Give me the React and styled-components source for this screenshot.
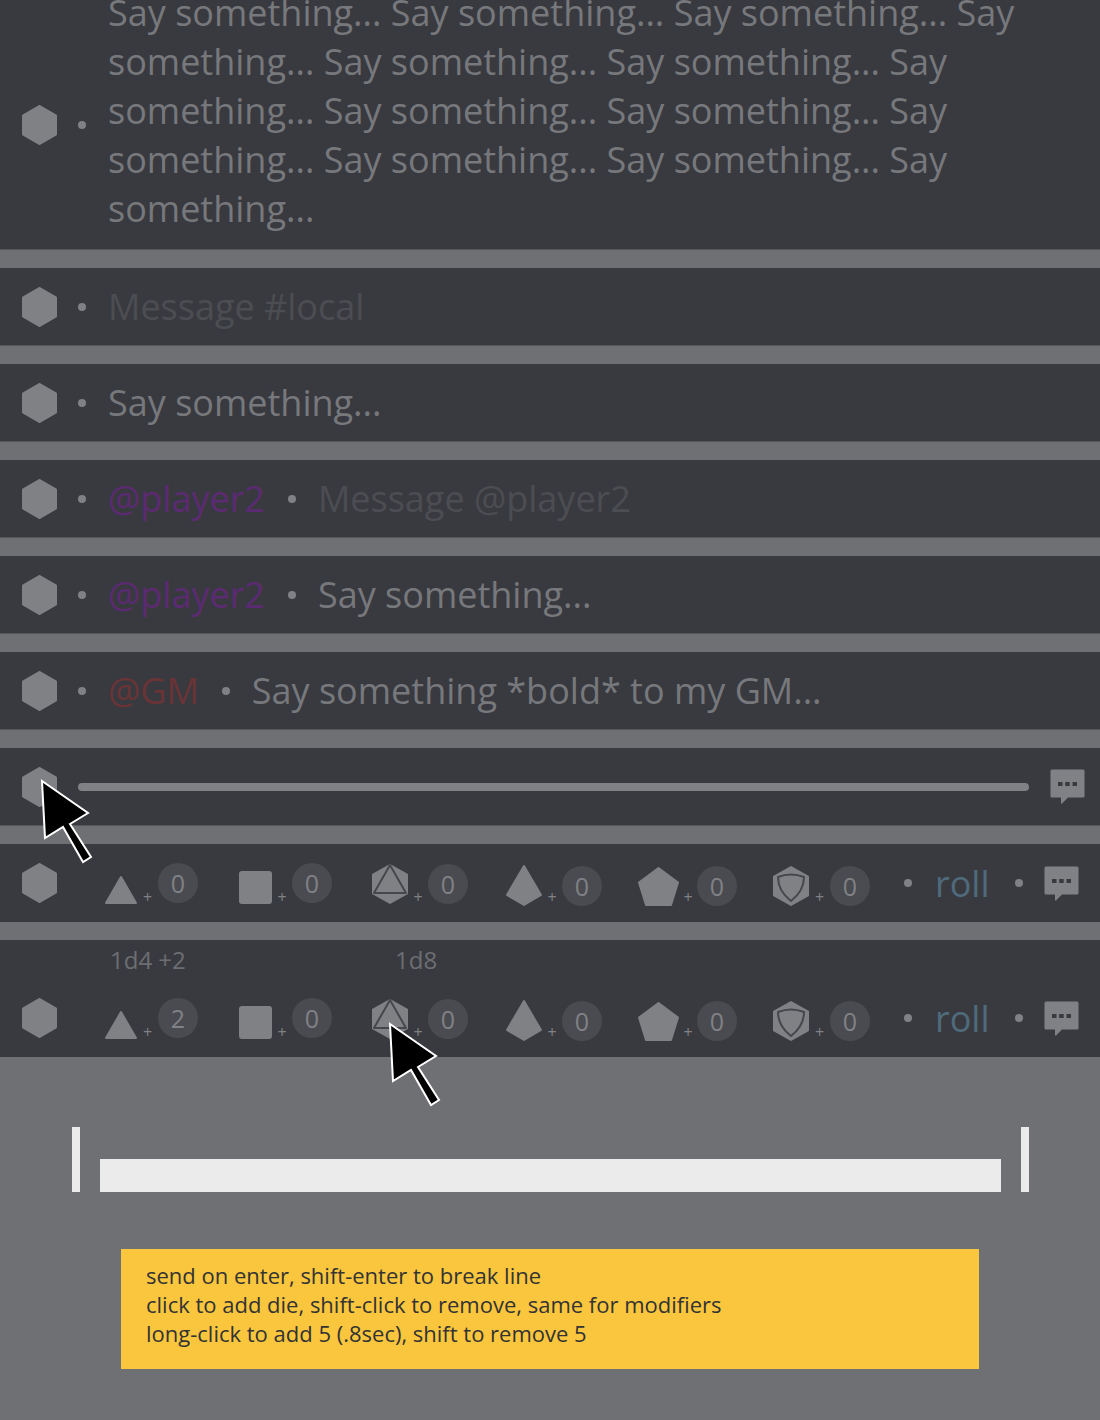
import React from "react";
import styled, { createGlobalStyle } from "styled-components";

const Global = createGlobalStyle`
  html, body { margin: 0; padding: 0; background: #6f7074; }
  body { font-family: "Open Sans", "Noto Sans", sans-serif; }
`;

const Page = styled.div`
  width: 1100px;
  height: 1420px;
  background: #6f7074;
  overflow: hidden;
`;

const Rows = styled.div`
  display: flex;
  flex-direction: column;
  gap: 18px;
`;

const Row = styled.div`
  position: relative;
  box-sizing: border-box;
  display: flex;
  align-items: center;
  height: ${(p) => p.$height || 78}px;
  padding-left: 22px;
  background: #393a40;
  border-bottom: 1px solid #55565a;
`;

const DiceRowWrap = styled.div`
  position: relative;
  box-sizing: border-box;
  height: ${(p) => p.$height}px;
  background: #393a40;
  display: flex;
  flex-direction: column;
  justify-content: flex-end;
`;

const DiceLine = styled.div`
  display: flex;
  align-items: center;
  height: 78px;
  padding-left: 22px;
  box-sizing: border-box;
`;

const Labels = styled.div`
  height: 39px;
  display: flex;
  align-items: center;
  padding-left: 110px;
  font-size: 24px;
  color: #6d6e72;
`;

const Label = styled.span`
  width: ${(p) => p.$width}px;
`;

const Dot = styled.span`
  flex: none;
  width: 8px;
  height: 8px;
  border-radius: 50%;
  background: #808185;
  margin: ${(p) => p.$margin || "0 22px 0 21px"};
`;

const Text = styled.div`
  flex: none;
  font-size: 36px;
  line-height: 49px;
  color: ${(p) => p.$color || "#77787c"};
  white-space: nowrap;
`;

const LongText = styled(Text)`
  flex: 1;
  white-space: normal;
  padding: 0 70px 28px 0;
`;

const Slider = styled.div`
  flex: none;
  width: 951px;
  height: 8px;
  margin: 0 21px 0 21px;
  border-radius: 4px;
  background: #808185;
`;

const HexSvg = styled.svg`
  flex: none;
  display: block;
`;

const Hexagon = () => (
  <HexSvg width="35" height="40" viewBox="0 0 35 40">
    <path d="M17.5 1.5 L33.5 10.8 V29.2 L17.5 38.5 L1.5 29.2 V10.8 Z" fill="#808185" stroke="#808185" strokeWidth="3" strokeLinejoin="round" />
  </HexSvg>
);

const Chat = () => (
  <HexSvg width="35" height="35" viewBox="0 0 35 35">
    <path d="M2 0.5 H33 Q34.5 0.5 34.5 2 V27 Q34.5 28.5 33 28.5 H18 L12 34.5 L11 34.5 V28.5 H2 Q0.5 28.5 0.5 27 V2 Q0.5 0.5 2 0.5 Z" fill="#808185" />
    <rect x="8" y="13" width="4.5" height="4" fill="#393a40" />
    <rect x="15.2" y="13" width="4.5" height="4" fill="#393a40" />
    <rect x="22.5" y="13" width="4.5" height="4" fill="#393a40" />
  </HexSvg>
);

const DIE = { fill: "#808185", stroke: "#808185", strokeWidth: 2, strokeLinejoin: "round" };
const CUT = { fill: "none", stroke: "#46474c", strokeWidth: 2, strokeLinejoin: "round" };

const Triangle = () => (
  <HexSvg width="32" height="29" viewBox="0 0 32 29">
    <path d="M16 2 L31 28 H1 Z" {...DIE} />
  </HexSvg>
);
const Square = () => (
  <HexSvg width="33" height="33" viewBox="0 0 33 33">
    <rect x="1" y="1" width="31" height="31" rx="2" {...DIE} />
  </HexSvg>
);
const Octa = () => (
  <HexSvg width="36" height="40" viewBox="0 0 36 40">
    <path d="M18 1 L35 10.5 V29.5 L18 39 L1 29.5 V10.5 Z" {...DIE} />
    <path d="M18 1 L34 29 H2 Z" {...CUT} />
  </HexSvg>
);
const Kite = () => (
  <HexSvg width="36" height="41" viewBox="0 0 36 41">
    <path d="M18 1 L35 30 L18 40 L1 30 Z" {...DIE} />
  </HexSvg>
);
const Pentagon = () => (
  <HexSvg width="41" height="39" viewBox="0 0 41 39">
    <path d="M20.5 1 L40 15.5 L33 38 H8 L1 15.5 Z" {...DIE} />
  </HexSvg>
);
const Shield = () => (
  <HexSvg width="36" height="40" viewBox="0 0 36 40">
    <path d="M18 1 L35 10.5 V29.5 L18 39 L1 29.5 V10.5 Z" {...DIE} />
    <path d="M5 11 Q18 6 31 11 Q31 25 18 35 Q5 25 5 11 Z" {...CUT} />
  </HexSvg>
);

const Die = styled.div`
  flex: none;
  position: relative;
  width: ${(p) => p.$width}px;
  height: 78px;
  display: flex;
  align-items: flex-start;
`;

const DieIcon = styled.div`
  flex: none;
  padding-top: ${(p) => p.$top}px;
`;

const Plus = styled.span`
  flex: none;
  width: ${(p) => p.$width}px;
  padding-top: 43px;
  text-align: center;
  font-size: 16px;
  line-height: 20px;
  color: #808185;
`;

const Counter = styled.span`
  flex: none;
  width: 40px;
  height: 40px;
  margin-top: ${(p) => p.$top}px;
  border-radius: 50%;
  background: #4a4b50;
  color: #808185;
  font-size: 25px;
  display: flex;
  align-items: center;
  justify-content: center;
`;

const DiceGroup = styled.div`
  display: flex;
  margin-left: 48px;
`;

const Roll = styled.span`
  flex: none;
  font-size: 36px;
  line-height: 49px;
  color: #4f6a7b;
`;

const Arrow = styled.svg`
  position: absolute;
  left: ${(p) => p.$x}px;
  top: ${(p) => p.$y}px;
  z-index: 3;
  overflow: visible;
`;

const Cursor = ({ x, y }) => (
  <Arrow $x={x} $y={y} width="52" height="84" viewBox="0 0 52 84">
    <path d="M1 1 L47 33 L29 44 L50 77 L42 82 L22 47 L4 58 Z" fill="#000" stroke="#fff" strokeWidth="2" />
  </Arrow>
);

const Bottom = styled.div`
  display: flex;
  flex-direction: column;
  align-items: center;
`;

const Bars = styled.div`
  margin-top: 70px;
  width: 957px;
  height: 65px;
  display: flex;
  align-items: flex-end;
  justify-content: space-between;
`;

const Tick = styled.div`
  width: 8px;
  height: 65px;
  background: #ebebeb;
`;

const Track = styled.div`
  width: 901px;
  height: 33px;
  background: #ebebeb;
`;

const Note = styled.div`
  box-sizing: border-box;
  width: 858px;
  height: 120px;
  margin-top: 57px;
  padding: 12px 25px;
  background: #fac63e;
  color: #333;
  font-size: 22px;
  line-height: 29px;
`;

const diceList = [
  { Icon: Triangle, w: 134, iconTop: 31, iconW: 32, plusW: 21, c: 19, value: 0 },
  { Icon: Square, w: 133, iconTop: 27, iconW: 33, plusW: 20, c: 19, value: 0 },
  { Icon: Octa, w: 134, iconTop: 20, iconW: 36, plusW: 20, c: 20, value: 0 },
  { Icon: Kite, w: 132, iconTop: 21, iconW: 36, plusW: 20, c: 22, value: 0 },
  { Icon: Pentagon, w: 135, iconTop: 23, iconW: 41, plusW: 18, c: 22, value: 0 },
  { Icon: Shield, w: 132, iconTop: 22, iconW: 36, plusW: 21, c: 22, value: 0 },
];

const DiceRow = ({ first = 0, rollShift = 0 }) => (
  <DiceLine>
    <Hexagon />
    <DiceGroup>
      {diceList.map(({ Icon, w, iconTop, plusW, c, value }, i) => (
        <Die key={i} $width={w}>
          <DieIcon $top={iconTop}><Icon /></DieIcon>
          <Plus $width={plusW}>+</Plus>
          <Counter $top={c}>{i === 0 && first ? first : value}</Counter>
        </Die>
      ))}
    </DiceGroup>
    <Dot $margin={`0 23px 0 ${rollShift ? -1 : -1}px`} />
    <Roll>roll</Roll>
    <Dot $margin="0 21px 0 25px" />
    <Chat />
  </DiceLine>
);

const LONG =
  "Say something... Say something... Say something... Say something... Say something... Say something... Say something... Say something... Say something... Say something... Say something... Say something... Say something...";

export default function App() {
  return (
    <Page>
      <Global />
      <Rows>
        <Row $height={250}>
          <Hexagon />
          <Dot />
          <LongText>{LONG}</LongText>
        </Row>
        <Row>
          <Hexagon />
          <Dot />
          <Text $color="#4c4d52">Message #local</Text>
        </Row>
        <Row>
          <Hexagon />
          <Dot />
          <Text>Say something...</Text>
        </Row>
        <Row>
          <Hexagon />
          <Dot />
          <Text $color="#5c2a72">@player2</Text>
          <Dot $margin="0 22px 0 23px" />
          <Text $color="#4c4d52">Message @player2</Text>
        </Row>
        <Row>
          <Hexagon />
          <Dot />
          <Text $color="#5c2a72">@player2</Text>
          <Dot $margin="0 22px 0 23px" />
          <Text>Say something...</Text>
        </Row>
        <Row>
          <Hexagon />
          <Dot />
          <Text $color="#6a3437">@GM</Text>
          <Dot $margin="0 22px 0 23px" />
          <Text>Say something *bold* to my GM...</Text>
        </Row>
        <Row>
          <Hexagon />
          <Slider />
          <Chat />
          <Cursor x={41} y={32} />
        </Row>
        <DiceRowWrap $height={78}>
          <DiceRow />
        </DiceRowWrap>
        <DiceRowWrap $height={117}>
          <Labels>
            <Label $width={285}>1d4 +2</Label>
            <Label $width={60}>1d8</Label>
          </Labels>
          <DiceRow first={2} rollShift={1} />
          <Cursor x={389} y={83} />
        </DiceRowWrap>
      </Rows>
      <Bottom>
        <Bars>
          <Tick />
          <Track />
          <Tick />
        </Bars>
        <Note>
          send on enter, shift-enter to break line
          <br />
          click to add die, shift-click to remove, same for modifiers
          <br />
          long-click to add 5 (.8sec), shift to remove 5
        </Note>
      </Bottom>
    </Page>
  );
}
